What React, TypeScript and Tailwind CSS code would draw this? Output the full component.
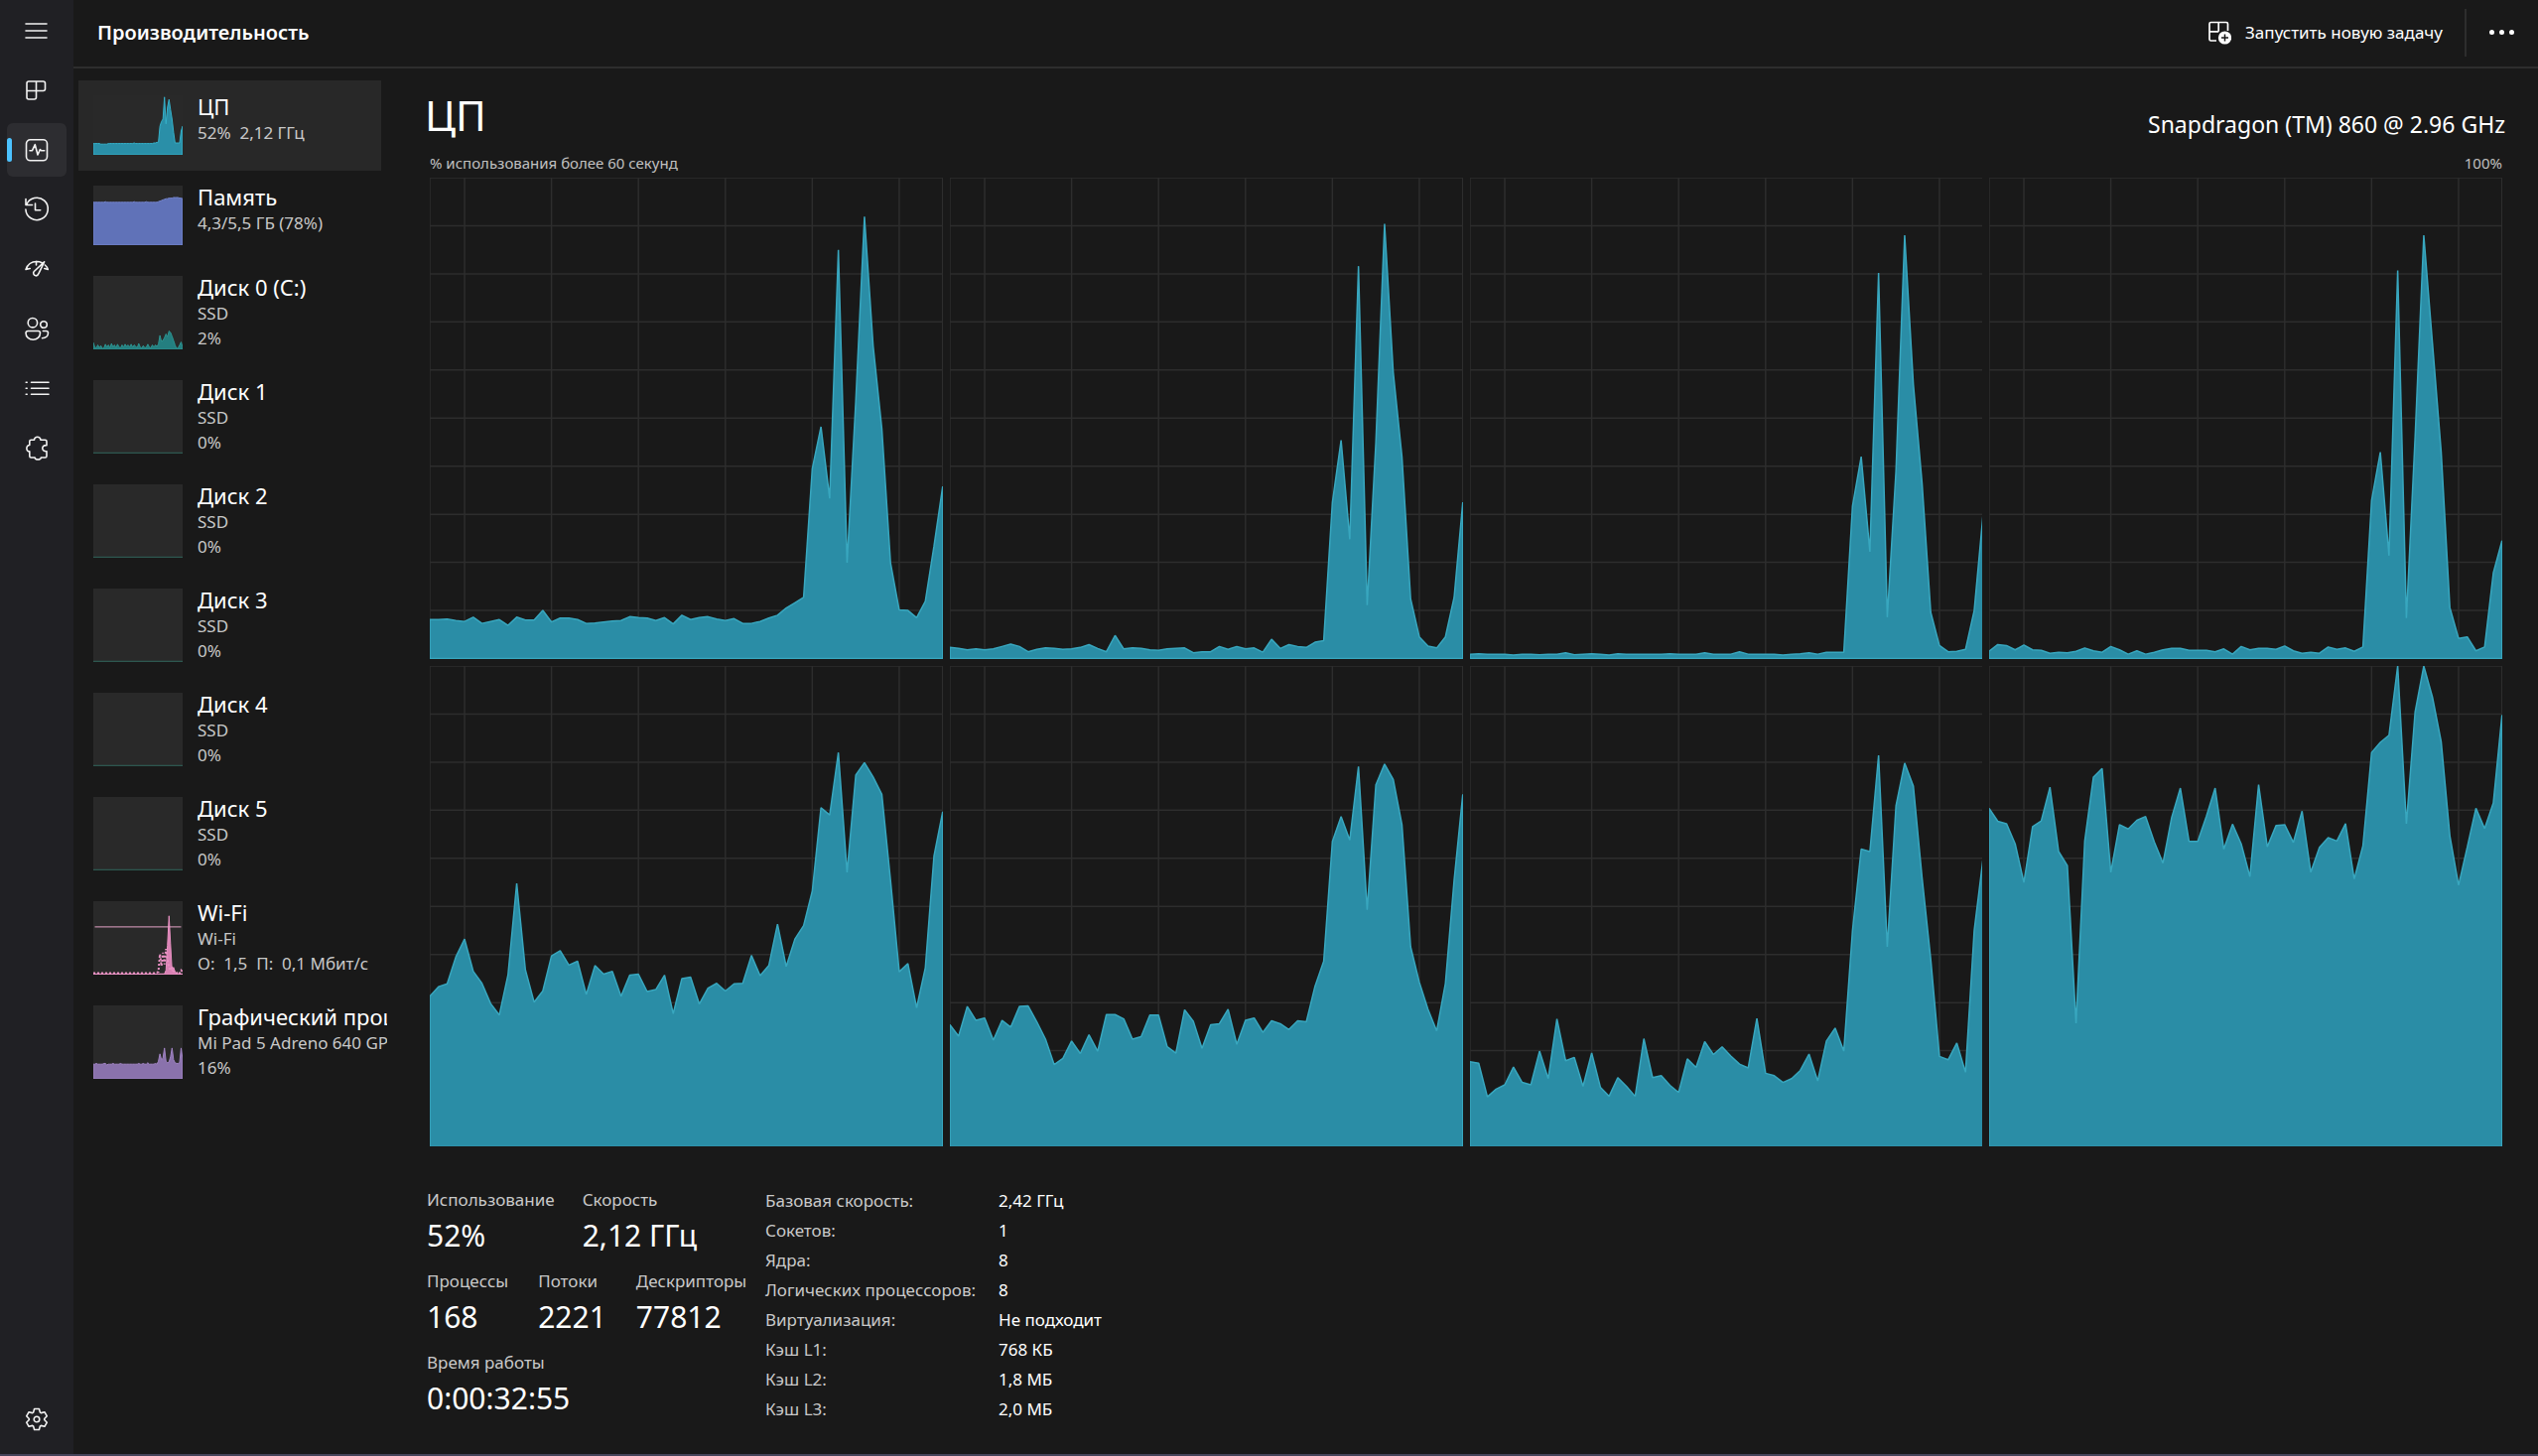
import React, { useState } from "react";

interface IDevice {
  name: string;
  lines: string[];
  values: number[];
  area: string;
  compact?: boolean;
  level?: number;
  dotted?: number[];
}

// one value per second, oldest first
const cores: number[][] = [
  [8.1, 8.1, 8.2, 7.9, 7.7, 8.6, 7.3, 7.7, 8.1, 6.9, 8.6, 8, 8, 10, 7.6, 8.4, 8.4, 8.1, 7.3, 7.4, 7.6, 7.8, 7.9, 8.7, 8.5, 8.4, 7.9, 8.5, 7.2, 9, 8.1, 8.5, 8.7, 8.2, 7.9, 8.3, 7.3, 7.3, 7.7, 8.4, 9, 10.5, 11.6, 12.7, 39.5, 48.2, 33.3, 85, 19.9, 53.5, 91.9, 65, 47.8, 19.9, 10.1, 10, 8.5, 11.9, 23.4, 35.8],
  [2.3, 2.1, 1.8, 2, 1.8, 2, 2.5, 3, 2.5, 1.4, 1.9, 2.2, 2.1, 1.9, 2, 2.3, 2.9, 2.1, 1.4, 4.8, 2, 2.2, 2.1, 1.8, 1.7, 2, 2.1, 2.2, 1.2, 1.4, 1.4, 2.5, 1.9, 2.5, 2, 2.2, 1.3, 4, 2.1, 2.9, 2.5, 2.3, 3.4, 3.7, 32.5, 45.4, 24.8, 81.6, 11.1, 45, 90.4, 59.5, 42, 12.4, 4.5, 2.6, 2.2, 4.5, 12.7, 32.5],
  [0.9, 1, 0.9, 0.9, 0.9, 0.7, 0.9, 0.9, 0.8, 0.9, 0.9, 1.2, 0.8, 0.9, 1, 0.9, 0.7, 1, 0.9, 0.9, 0.9, 0.9, 0.9, 1, 0.9, 0.9, 0.9, 1.2, 0.9, 0.9, 0.9, 1.4, 0.9, 0.9, 0.9, 0.9, 0.7, 0.9, 1, 1.2, 0.9, 1.3, 1.3, 1.3, 31.7, 42, 22.2, 80.2, 8.6, 39, 88, 57, 36.5, 9.6, 2.7, 1.4, 1.5, 1.9, 10, 29.6],
  [1.5, 2.9, 2.7, 1.8, 2.8, 1.8, 1.7, 1.1, 1.3, 1.2, 1.5, 2.2, 1.6, 1.3, 2.5, 1.8, 0.9, 1.6, 0.9, 1.3, 1.8, 2.1, 2.1, 1.7, 1.7, 1.7, 1.4, 2, 0.9, 2.5, 1.8, 2.1, 2.1, 1.9, 2.6, 1.6, 1.1, 1.3, 1.1, 2.4, 1.9, 2.2, 1.5, 2.4, 32.9, 42.9, 21.4, 80.7, 8.4, 46, 88, 65.5, 43, 10.6, 4.2, 4.5, 1.6, 2.4, 17.8, 24.5],
  [31.3, 33.3, 33.9, 39.5, 43.2, 36.5, 34, 29.8, 27.4, 35.8, 54.8, 36.8, 30.1, 32.4, 39.7, 40.8, 37.8, 38.6, 31.7, 37.7, 35.9, 36.5, 31.3, 35.7, 35.9, 32.3, 32.7, 35.7, 27.7, 35, 35.3, 29.7, 33, 34, 32.4, 33.9, 34, 39.8, 35.6, 37.7, 46.3, 37.5, 43.2, 46, 53.2, 70.5, 69, 82, 57.1, 77.3, 79.9, 76.9, 73.3, 55.4, 36.4, 38.1, 28.9, 37.2, 60.5, 69.7],
  [25.4, 23, 29.2, 26.3, 26.8, 22.2, 26.3, 24.9, 29.2, 29.3, 26, 22.4, 17.1, 18.4, 22, 19.4, 23.3, 19.9, 27.5, 27.5, 26.6, 22.4, 22.9, 27.4, 27.4, 20.8, 19.5, 28.5, 26.1, 20.5, 25.4, 25.6, 28.6, 21.3, 26.3, 26.8, 23.8, 26.2, 25.6, 24.4, 26.2, 26, 33.4, 38.6, 63.5, 68.7, 63.8, 79.1, 49.3, 75.3, 79.6, 76.4, 67, 41.6, 34.2, 28.6, 24.1, 34, 55.4, 73.3],
  [17.7, 17.4, 10.4, 12, 12.9, 16.6, 13.4, 12.9, 19.9, 14.2, 26.6, 17.9, 18.6, 12.6, 19.5, 12.4, 10.5, 14.4, 12.6, 10.5, 22.5, 14.4, 14.8, 12.8, 11.3, 18.3, 16.5, 21.9, 19.2, 20.8, 18.9, 17.2, 16.4, 26.7, 15.3, 14.8, 13.4, 14.2, 15.9, 19.3, 13.7, 22, 24.7, 19.9, 45, 61.9, 61.4, 81.4, 41.6, 70.9, 79.8, 75, 56, 39, 18.8, 18.1, 21.6, 15.5, 45, 59.7],
  [70.4, 67.7, 67.2, 63, 55, 66.6, 67.8, 74.8, 61.4, 58.5, 25.7, 63.6, 76.9, 78.7, 57.1, 67, 66.1, 67.9, 68.7, 63.4, 59, 68.5, 74.6, 63.5, 63.5, 68.8, 74.6, 61.9, 67.1, 63, 56.2, 75.3, 62.4, 66.8, 67, 63.3, 69.8, 57.1, 62.3, 64.3, 63.6, 67.2, 55.7, 62.6, 82, 84.1, 85.6, 100, 67.2, 90.4, 100, 93.5, 84.3, 64.7, 54.4, 62.3, 70.4, 66.2, 71.5, 89.8],
];

const cpuTotal = [19, 19, 19, 19, 19, 18, 18, 18, 18, 18, 19, 19, 19, 19, 19, 19, 19, 19, 19, 19, 19, 19, 19, 19, 19, 19, 19, 20, 19, 19, 19, 19, 19, 19, 19, 19, 19, 19, 19, 19, 20, 20, 21, 21, 48, 56, 60, 97, 52, 80, 93, 76, 60, 38, 20, 20, 20, 20, 40, 48];
const memory = [72, 72, 72, 72, 72, 72, 72, 72, 73, 72, 72, 72, 72, 72, 72, 72, 72, 72, 72, 72, 72, 72, 72, 72, 72, 72, 72, 73, 72, 72, 72, 72, 72, 72, 72, 73, 72, 72, 72, 72, 72, 72, 72, 73, 74, 75, 76, 77, 78, 78, 79, 79, 79, 80, 80, 80, 80, 79, 79, 78];
const disk0 = [9, 3, 2, 6, 2, 5, 1, 2, 7, 3, 6, 2, 8, 3, 6, 2, 7, 3, 2, 6, 3, 7, 4, 6, 3, 7, 3, 6, 4, 2, 8, 3, 2, 5, 2, 3, 7, 3, 2, 6, 3, 6, 4, 7, 19, 11, 12, 16, 21, 17, 25, 23, 18, 12, 6, 1, 2, 6, 10, 3];
const idle = [1, 1];
const wifi = [1, 1, 1, 1, 1, 1, 1, 1, 1, 1, 1, 1, 1, 1, 1, 1, 1, 1, 1, 1, 1, 1, 1, 1, 1, 1, 1, 1, 1, 1, 1, 1, 1, 1, 1, 1, 1, 1, 1, 1, 1, 1, 1, 1, 1, 1, 1, 1, 6, 40, 80, 42, 5, 10, 4, 1, 1, 1, 1, 1];
const wifiSend = [2, 2, 2, 2, 2, 2, 2, 2, 2, 2, 2, 2, 2, 2, 2, 2, 2, 2, 2, 2, 2, 2, 2, 2, 2, 2, 2, 2, 2, 2, 2, 2, 2, 2, 2, 2, 2, 2, 2, 2, 2, 2, 3, 4, 28, 12, 30, 14, 35, 20, 10, 6, 9, 5, 3, 2, 4, 2, 6, 4];
const gpu = [20, 20, 21, 20, 20, 20, 20, 21, 21, 19, 20, 20, 20, 21, 20, 20, 20, 20, 21, 20, 20, 20, 20, 20, 20, 20, 20, 20, 20, 20, 21, 20, 20, 21, 20, 20, 22, 20, 20, 20, 20, 21, 20, 24, 34, 26, 28, 42, 24, 22, 23, 30, 42, 26, 22, 21, 21, 22, 42, 26];

const devices: IDevice[] = [
  { name: "ЦП", lines: ["52%  2,12 ГГц"], values: cpuTotal, area: "fill-[#2a8fa8] stroke-[#35b0c8]", compact: true },
  { name: "Память", lines: ["4,3/5,5 ГБ (78%)"], values: memory, area: "fill-[#6072b8] stroke-[#7484cc]", compact: true },
  { name: "Диск 0 (C:)", lines: ["SSD", "2%"], values: disk0, area: "fill-[#247f80] stroke-[#2c9390]" },
  { name: "Диск 1", lines: ["SSD", "0%"], values: idle, area: "fill-none stroke-[#2f5f55]" },
  { name: "Диск 2", lines: ["SSD", "0%"], values: idle, area: "fill-none stroke-[#2f5f55]" },
  { name: "Диск 3", lines: ["SSD", "0%"], values: idle, area: "fill-none stroke-[#2f5f55]" },
  { name: "Диск 4", lines: ["SSD", "0%"], values: idle, area: "fill-none stroke-[#2f5f55]" },
  { name: "Диск 5", lines: ["SSD", "0%"], values: idle, area: "fill-none stroke-[#2f5f55]" },
  { name: "Wi-Fi", lines: ["Wi-Fi", "О:  1,5  П:  0,1 Мбит/с"], values: wifi, area: "fill-[#d982b4] stroke-[#ea92c4]", level: 65, dotted: wifiSend },
  { name: "Графический процессор 0", lines: ["Mi Pad 5 Adreno 640 GPU", "16%"], values: gpu, area: "fill-[#8a72ac] stroke-[#a184c4]" },
];

const details = [
  ["Базовая скорость:", "2,42 ГГц"],
  ["Сокетов:", "1"],
  ["Ядра:", "8"],
  ["Логических процессоров:", "8"],
  ["Виртуализация:", "Не подходит"],
  ["Кэш L1:", "768 КБ"],
  ["Кэш L2:", "1,8 МБ"],
  ["Кэш L3:", "2,0 МБ"],
];

const navItems = [
  { label: "Процессы", d: "M4 3h14.5a2 2 0 0 1 2 2v5.5a2 2 0 0 1-2 2h-7V19a2 2 0 0 1-2 2H4a2 2 0 0 1-2-2V5a2 2 0 0 1 2-2ZM11.5 3v9.5M2 12.5h9.5" },
  { label: "Производительность", d: "M5.5 1.8h13a4 4 0 0 1 4 4v13a4 4 0 0 1-4 4h-13a4 4 0 0 1-4-4v-13a4 4 0 0 1 4-4ZM5 12.7h2.5l2.8-6L13 17l2.3-5.3 1.2 1h3.2" },
  { label: "Журнал приложений", d: "M1 1.5v6h6.5M1.6 7.5A11.2 11.2 0 1 1 .9 12M10.5 6v6.7h5.2" },
  { label: "Автозагрузка приложений", d: "M1 12.5C2.8 7.4 7 4.5 12 4.5c2 0 3.7.4 5.2 1.2M19.6 4.8 9.3 14.5c-1.3 1.5-.5 4 1.6 4.3 1.5.2 2.5-.8 2.9-2L19.600 4.800ZM20.3 8c1.4 1.2 2.4 2.7 3 4.5M11.5 4.5v3.5M1 12.5l4.2-1M23.3 12.5l-3.5-1" },
  { label: "Пользователи", d: "M7.9 1.5a4.7 4.7 0 1 0 0 9.4 4.7 4.7 0 0 0 0-9.4ZM19 4.7a3.3 3.3 0 1 0 0 6.6 3.3 3.3 0 0 0 0-6.6ZM3 14.5h10.5a2 2 0 0 1 2 2c0 4-3.4 6.8-7.2 6.8S1 20.5 1 16.5a2 2 0 0 1 2-2ZM18.3 14.5h3.2a2 2 0 0 1 2 2c0 3-2.3 5.2-6 5.2" },
  { label: "Подробности", d: "M6.5 6.3H24M6.5 12.3H24M6.5 18.3H24M1.2 6.3h1M1.2 12.3h1M1.2 18.3h1" },
  { label: "Службы", d: "M6.3 4.2h3.2c-.2-3.900 6.600-3.900 6.400 0h4.600a1.500 1.500 0 0 1 1.500 1.500v4c-5.600-.6-5.600 6.600 0 6v4.800a1.500 1.500 0 0 1-1.500 1.500h-4.200c.1 2.600-6.300 2.600-6.200 0H6.300a1.500 1.500 0 0 1-1.500-1.500v-4.600c-3.900.2-3.900-6.600 0-6.400V5.700a1.500 1.500 0 0 1 1.500-1.500Z" },
];

const NavIcon: React.FC<{ d: string }> = ({ d }) => (
  <svg
    viewBox="0 0 24 24"
    className="size-6 overflow-visible fill-none stroke-[#f2f2f2] stroke-[1.6]"
    strokeLinejoin="round"
    strokeLinecap="round"
  >
    <path d={d} />
  </svg>
);

const toPoints = (values: number[]) =>
  values.map((v, i) => `${(i * 59) / (values.length - 1)},${100 - v}`).join(" ");

const CoreChart: React.FC<{ values: number[] }> = ({ values }) => (
  <svg viewBox="0 0 59 100" preserveAspectRatio="none" className="h-full w-full overflow-hidden">
    <g className="stroke-[#2d2d2d] stroke-[1.5]">
      {[0, 10, 20, 30, 40, 50, 60, 70, 80, 90].map((y) => (
        <line key={y} x1="0" x2="59" y1={y} y2={y} vectorEffect="non-scaling-stroke" />
      ))}
      {[0, 4, 14, 24, 34, 44, 54, 59].map((x) => (
        <line key={x} x1={x} x2={x} y1="0" y2="100" vectorEffect="non-scaling-stroke" />
      ))}
    </g>
    <polygon
      points={`0,100 ${toPoints(values)} 59,100`}
      className="fill-[#2a8da6] stroke-[#38a7bf] stroke-[1.5]"
      strokeLinejoin="bevel"
      vectorEffect="non-scaling-stroke"
    />
  </svg>
);

const Thumbnail: React.FC<{ device: IDevice }> = ({ device }) => (
  <svg
    viewBox="0 0 59 100"
    preserveAspectRatio="none"
    className={`w-[90px] shrink-0 bg-[#292929] ${device.compact ? "h-[60px]" : "h-[74px]"}`}
  >
    <polygon
      points={`0,100 ${toPoints(device.values)} 59,100`}
      className={device.area}
      strokeLinejoin="bevel"
      vectorEffect="non-scaling-stroke"
    />
    {device.dotted && (
      <polyline
        points={toPoints(device.dotted)}
        className="fill-none stroke-[#ea92c4] stroke-2"
        strokeDasharray="2 2"
        vectorEffect="non-scaling-stroke"
      />
    )}
    {device.level && (
      <line
        x1="1"
        x2="58"
        y1={100 - device.level}
        y2={100 - device.level}
        className="stroke-[#e6a3c8]"
        vectorEffect="non-scaling-stroke"
      />
    )}
  </svg>
);

const Stat: React.FC<{ label: string; value: string }> = ({ label, value }) => (
  <div className="whitespace-nowrap">
    <dt className="text-[17px] leading-7 text-[#c8c8c8]">{label}</dt>
    <dd className="text-[30px] leading-[44px] text-white">{value}</dd>
  </div>
);

const App: React.FC = () => {
  const [page, setPage] = useState("Производительность");
  const [selected, setSelected] = useState("ЦП");

  return (
    <div className="flex min-h-screen border-b-2 border-[#45435a] bg-[#191919] font-['Noto_Sans','Open_Sans',sans-serif] text-white">
      {/* Navigation */}
      <nav className="flex w-[74px] shrink-0 flex-col items-center gap-[6px] bg-[#202024] py-1">
        <button aria-label="Меню" className="flex h-[54px] w-[60px] items-center justify-center">
          <NavIcon d="M1 5h21M1 12h21M1 19h21" />
        </button>
        {navItems.map((item) => (
          <button
            key={item.label}
            aria-label={item.label}
            onClick={() => setPage(item.label)}
            className={`relative flex h-[54px] w-[60px] items-center justify-center rounded-md ${
              page === item.label ? "bg-[#2d2d31]" : ""
            }`}
          >
            {page === item.label && (
              <span className="absolute left-0 h-6 w-[5px] rounded-full bg-[#4cc2ff]" />
            )}
            <NavIcon d={item.d} />
          </button>
        ))}
        <button
          aria-label="Параметры"
          className="mt-auto mb-1 flex h-[54px] w-[60px] items-center justify-center"
        >
          <NavIcon d="M8.6 5.1 9.6 1.5h4.8l1 3.6.9.5 3.6-.9 2.4 4.1-2.6 2.7v1l2.6 2.7-2.4 4.1-3.6-.9-.9.5-1 3.6H9.600l-1-3.600-.9-.5-3.600.9-2.400-4.100 2.600-2.700v-1L1.700 8.800l2.400-4.100 3.600.9ZM12 9.200a2.800 2.800 0 1 0 0 5.600 2.800 2.800 0 0 0 0-5.600Z" />
        </button>
      </nav>

      <div className="flex min-w-0 flex-1 flex-col">
        {/* Header */}
        <header className="flex h-[69px] shrink-0 items-center justify-between border-b-2 border-[#2d2d2d] pr-3 pb-[2px] pl-6">
          <h1 className="text-xl font-semibold">Производительность</h1>
          <div className="flex items-center">
            <button className="flex items-center gap-[14px] pr-[22px] text-[17px]">
              <svg viewBox="0 0 24 24" className="size-6 fill-none stroke-white stroke-[1.7]">
                <path d="M9 20H3.5A1.5 1.5 0 0 1 2 18.5V3a1.5 1.5 0 0 1 1.5-1.5H19A1.5 1.5 0 0 1 20.5 3v7M11.2 1.5v9.3M2 10.8h9.2" />
                <circle cx="17.5" cy="17" r="6.6" className="fill-white stroke-none" />
                <path d="M17.5 13.5v7M14 17h7" className="stroke-[#191919] stroke-[1.5]" />
              </svg>
              Запустить новую задачу
            </button>
            <span className="h-12 w-[2px] bg-[#2d2d2d]" />
            <button aria-label="Дополнительно" className="flex h-12 items-center gap-[5px] pr-3 pl-[23px]">
              <span className="size-[5px] rounded-full bg-white" />
              <span className="size-[5px] rounded-full bg-white" />
              <span className="size-[5px] rounded-full bg-white" />
            </button>
          </div>
        </header>

        <div className="flex min-h-0 flex-1">
          {/* Devices */}
          <div className="flex w-[316px] shrink-0 flex-col overflow-hidden pt-3 pl-[5px]">
            {devices.map((device) => (
              <button
                key={device.name}
                onClick={() => setSelected(device.name)}
                className={`flex w-[305px] items-start gap-[15px] pt-[15px] pl-[15px] text-left ${
                  device.compact ? "h-[91px]" : "h-[105px]"
                } ${selected === device.name ? "bg-[#282828]" : ""}`}
              >
                <Thumbnail device={device} />
                <span className="-mt-[3px] flex flex-col whitespace-pre">
                  <span className="text-[22px] leading-7">{device.name}</span>
                  {device.lines.map((line) => (
                    <span key={line} className="text-[17px] leading-[25px] text-[#c8c8c8]">
                      {line}
                    </span>
                  ))}
                </span>
              </button>
            ))}
          </div>

          {/* Details */}
          <main className="flex min-w-0 flex-1 flex-col pt-5 pr-[33px] pb-[30px] pl-[38px]">
            <div className="flex h-[60px] items-start justify-between">
              <h2 className="text-[42px] leading-[54px]">ЦП</h2>
              <p className="mt-6 text-[23px] leading-6">Snapdragon (TM) 860 @ 2.96 GHz</p>
            </div>
            <div className="flex justify-between pr-[3px] pl-[5px] text-[15px] leading-[30px] text-[#c0c0c0]">
              <span>% использования более 60 секунд</span>
              <span>100%</span>
            </div>

            <div className="mr-[3px] ml-[5px] grid min-h-[600px] flex-1 grid-cols-4 grid-rows-2 gap-[7px]">
              {cores.map((values, i) => (
                <div key={i} className="h-0 min-h-full min-w-0">
                  <CoreChart values={values} />
                </div>
              ))}
            </div>

            <div className="flex pt-10 pl-[2px]">
              <dl className="flex w-[341px] shrink-0 flex-col gap-[10px]">
                <div className="flex gap-7">
                  <Stat label="Использование" value="52%" />
                  <Stat label="Скорость" value="2,12 ГГц" />
                </div>
                <div className="flex gap-[30px]">
                  <Stat label="Процессы" value="168" />
                  <Stat label="Потоки" value="2221" />
                  <Stat label="Дескрипторы" value="77812" />
                </div>
                <Stat label="Время работы" value="0:00:32:55" />
              </dl>
              <table className="text-left text-[17px] leading-[30px]">
                <tbody>
                  {details.map(([label, value]) => (
                    <tr key={label}>
                      <th scope="row" className="w-[235px] p-0 font-normal whitespace-nowrap text-[#c8c8c8]">
                        {label}
                      </th>
                      <td className="p-0 whitespace-nowrap">{value}</td>
                    </tr>
                  ))}
                </tbody>
              </table>
            </div>
          </main>
        </div>
      </div>
    </div>
  );
};

export default App;
